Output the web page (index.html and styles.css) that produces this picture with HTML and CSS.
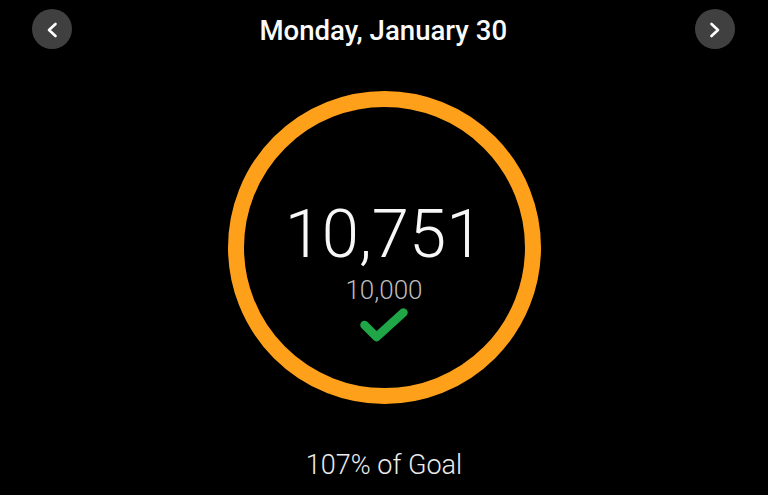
FILE: index.html
```html
<!DOCTYPE html>
<html>
<head>
<meta charset="utf-8">
<link rel="stylesheet" href="styles.css">
</head>
<body>
<div class="screen">
  <header class="header">
    <button class="nav-btn" aria-label="Previous day">
      <svg viewBox="0 0 40 40" width="40" height="40"><polyline points="23.5,15 17,21 23.5,27" fill="none" stroke="#fff" stroke-width="2.6" stroke-linecap="round" stroke-linejoin="round"/></svg>
    </button>
    <h1 class="title">Monday, January 30</h1>
    <button class="nav-btn" aria-label="Next day">
      <svg viewBox="0 0 40 40" width="40" height="40"><polyline points="16.5,15 23,21 16.5,27" fill="none" stroke="#fff" stroke-width="2.6" stroke-linecap="round" stroke-linejoin="round"/></svg>
    </button>
  </header>
  <main class="main">
    <div class="ring">
      <div class="steps">10,751</div>
      <div class="goal">10,000</div>
      <svg class="check" viewBox="0 0 52 38" width="52" height="38"><polyline points="6.5,18 18.5,30 45.5,5.5" fill="none" stroke="#1fa647" stroke-width="8.5" stroke-linecap="round" stroke-linejoin="round"/></svg>
    </div>
    <div class="percent">107% of Goal</div>
  </main>
</div>
</body>
</html>
```

FILE: styles.css
```css
html, body {
  margin: 0;
  padding: 0;
  background: #000;
}
body {
  width: 768px;
  height: 495px;
  overflow: hidden;
  font-family: Roboto, "Noto Sans", "Liberation Sans", sans-serif;
  color: #fff;
}
.screen {
  display: flex;
  flex-direction: column;
  height: 495px;
}
.header {
  height: 58px;
  display: flex;
  align-items: center;
  justify-content: space-between;
  padding: 0 33px 0 31.5px;
}
.nav-btn {
  width: 40px;
  height: 40px;
  border: none;
  border-radius: 50%;
  background: #404040;
  padding: 0;
  display: flex;
  align-items: center;
  justify-content: center;
}
.nav-btn svg {
  display: block;
}
.title {
  margin: 3px 0 0 0;
  font-size: 27.6px;
  font-weight: 500;
  line-height: 32px;
  color: #fafafa;
}
.main {
  display: flex;
  flex-direction: column;
  align-items: center;
  padding-top: 32.5px;
}
.ring {
  width: 313px;
  height: 313px;
  box-sizing: border-box;
  border: 16px solid #ffa01a;
  border-radius: 50%;
  display: flex;
  flex-direction: column;
  align-items: center;
  padding-top: 94px;
}
.steps {
  font-size: 67px;
  font-weight: 300;
  line-height: 67px;
  color: #f7f7f7;
}
.goal {
  margin-top: 9px;
  font-size: 26px;
  font-weight: 300;
  line-height: 26px;
  color: #bcbcbc;
}
.check {
  display: block;
  margin-top: 4px;
}
.percent {
  margin-top: 45.5px;
  font-size: 27px;
  font-weight: 300;
  line-height: 32px;
  color: #ececec;
}
```
